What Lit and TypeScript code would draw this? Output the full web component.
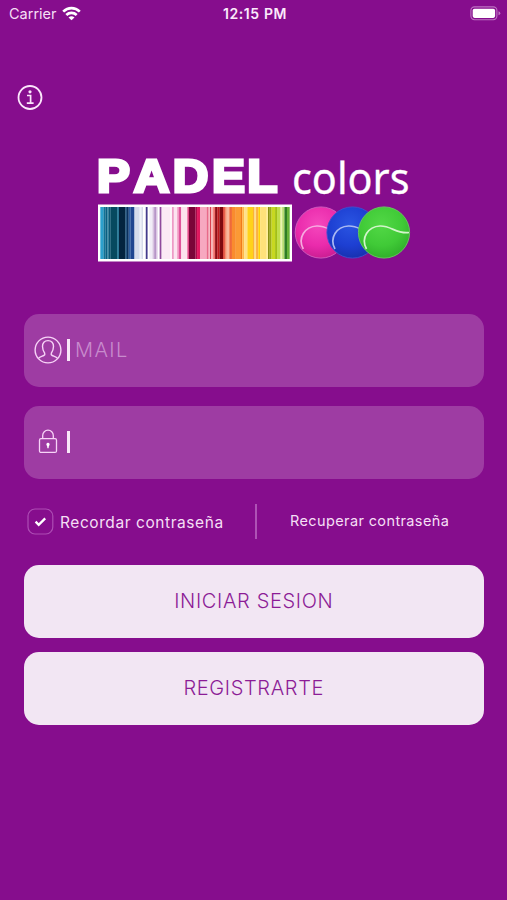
import { LitElement, html, css, svg } from "lit";
import { customElement } from "lit/decorators.js";

// Barcode bands: [left edge, colour]; units are thirds of a pixel, from 30 to 617.
const bands: [number, string][] = [
  [30, "#2ba0cc"], [40, "#107397"], [46, "#0b5f80"], [51, "#3b8fa9"], [55, "#0b5a78"], [62, "#064a5f"],
  [82, "#2a7a96"], [88, "#03243f"], [108, "#0e4a78"], [112, "#0a2f5c"], [118, "#2d5ea0"], [124, "#1f4690"],
  [136, "#d5dcec"], [152, "#eef1fa"], [158, "#cfd5e8"], [162, "#ffffff"], [171, "#433a8c"], [177, "#ffffff"],
  [182, "#f1edf7"], [192, "#d7c4e0"], [197, "#b795c8"], [204, "#dcc8e4"], [208, "#ffffff"], [214, "#8f4a9c"],
  [220, "#fbeaf5"], [248, "#ffffff"], [252, "#ee9bc6"], [258, "#fce4f0"], [268, "#f5a8cc"], [273, "#e0559b"],
  [281, "#fde3ee"], [300, "#e44b8a"], [305, "#7a0538"], [325, "#a80a4a"], [330, "#e0185f"], [340, "#f7a8c0"],
  [360, "#e86a8a"], [366, "#f9c0cc"], [370, "#d9404f"], [374, "#f7b5b5"], [380, "#f0706a"], [386, "#8e0d14"],
  [393, "#c21a1c"], [400, "#7e0a0e"], [411, "#e03a28"], [416, "#f4906f"], [422, "#f9b79a"], [430, "#ef6a3a"],
  [438, "#f98c2e"], [450, "#fb9a35"], [466, "#f07a1a"], [470, "#ffb84a"], [476, "#ffe08a"], [486, "#ffd21a"],
  [504, "#f9a81e"], [508, "#ffe08a"], [513, "#fbb040"], [520, "#ffd400"], [526, "#ffe27a"], [546, "#fff0a0"],
  [550, "#8a8f10"], [555, "#9bab14"], [561, "#c8d820"], [572, "#a3bf14"], [578, "#c0de4a"], [589, "#e9f3b0"],
  [594, "#b8dc70"], [601, "#2f7d24"], [609, "#66b035"],
];
const FIRST = 30;
const LAST = 617;
const BAND_SCALE = 189.3 / (LAST - FIRST);

const balls = [
  { x: 222.8, hi: "#f548bd", mid: "#ea2bac", low: "#c81c90", edge: "#d45fc0", seam: "#f7a9e0", id: "p" },
  { x: 254.5, hi: "#2a55e2", mid: "#1d3fd2", low: "#1730ac", edge: "#3f4fcf", seam: "#a9b8f2", id: "b" },
  { x: 286, hi: "#52d846", mid: "#40ca37", low: "#2fae2a", edge: "#69c860", seam: "#d3f5cb", id: "g" },
];

@customElement("padel-logo")
class PadelLogo extends LitElement {
  static styles = css`
    :host { display: block; }
    svg { display: block; overflow: visible; }
    .padel { font: 700 47px "Liberation Sans", Arial, sans-serif; stroke: #fff; stroke-width: 3.2px; }
    .colors { font: 400 44px "Noto Sans", sans-serif; stroke: #fff; stroke-width: .3px; }
  `;
  render() {
    return html`<svg width="320" height="110" viewBox="0 0 320 110">
      <defs>
        ${balls.map((b) => svg`<radialGradient id=${b.id} cx=".45" cy=".35" r=".68">
          <stop offset="0" stop-color=${b.hi}></stop>
          <stop offset=".6" stop-color=${b.mid}></stop>
          <stop offset="1" stop-color=${b.low}></stop>
        </radialGradient>`)}
      </defs>
      <text class="padel" transform="scale(1.05 1)" x="-0.9 34 71.3 108.500 142.200" y="40.300" fill="#fff">PADEL</text>
      <text class="colors" x="194" y="41.500" fill="#fff" textLength="117.500" lengthAdjust="spacingAndGlyphs">colors</text>
      <rect x="0" y="52.5" width="194" height="57" fill="#fff"></rect>
      ${bands.map(([x, colour], i) => {
        const next = i + 1 < bands.length ? bands[i + 1][0] : LAST;
        return svg`<rect x=${2.3 + (x - FIRST) * BAND_SCALE} y="55" width=${(next - x) * BAND_SCALE + 0.1} height="52" fill=${colour}></rect>`;
      })}
      ${balls.map((b) => svg`
        <circle cx=${b.x} cy="80.5" r="25.6" fill="url(#${b.id})" stroke=${b.edge} stroke-width=".9"></circle>
        <path transform="translate(${b.x - 286} 0)" fill="none" stroke=${b.seam} stroke-width="1.7"
          d="M268.500 97C262.500 86 270 74.500 282 74C293 73.500 299 82.500 311 80.500"></path>`)}
    </svg>`;
  }
}

@customElement("app-root")
class AppRoot extends LitElement {
  static styles = css`
    :host {
      display: flex; flex-direction: column; box-sizing: border-box;
      width: 507px; height: 900px; overflow: hidden;
      background: #860d8d; color: #f5dff5;
      font-family: Inter, "Open Sans", sans-serif;
    }
    svg { display: block; flex: none; }
    .status {
      display: grid; grid-template-columns: 1fr auto 1fr; align-items: center;
      height: 27px; padding: 0 6px 0 9px; box-sizing: border-box;
    }
    .carrier { display: flex; align-items: center; gap: 5px; font-size: 14.5px; letter-spacing: 0; }
    .time { font-size: 14px; font-weight: 600; letter-spacing: .6px; color: #fbeafb; }
    .battery { justify-self: end; }
    .info { margin: 57px 0 0 17px; }
    padel-logo { margin: 42px 0 0 97.5px; }
    .form { display: flex; flex-direction: column; margin: 52px 23.5px 0 24px; }
    .field {
      display: flex; align-items: center; height: 73px; border-radius: 15px;
      background: #9e3ca3; padding: 0 0 1px 9px; box-sizing: border-box; margin-bottom: 18.5px;
    }
    .slot { width: 30px; display: flex; justify-content: center; }
    .caret { width: 3px; height: 22px; background: #f8e8f8; margin: 0 5px 0 4px; }
    .hint { color: #c88bcd; font-size: 20px; letter-spacing: 1.4px; font-weight: 300; }
    .options { display: flex; align-items: center; height: 34px; margin: 7px 0 27px; }
    .remember { display: flex; align-items: center; gap: 6px; width: 231px; padding-left: 3px; box-sizing: border-box; font-size: 15.5px; letter-spacing: .57px; }
    .remember span { padding-top: 2px; }
    .divider { width: 1.5px; height: 35px; background: #ae52b5; }
    .recover { margin-left: 33.5px; padding-bottom: 1px; font-size: 14.5px; letter-spacing: .38px; }
    .btn {
      display: flex; align-items: center; justify-content: center;
      height: 73px; border: 0; border-radius: 15px; padding: 0 0 1px; margin-bottom: 14px;
      background: #f2e6f3; color: #8c1c96; font: 300 20px Inter, sans-serif; letter-spacing: .65px;
    }
  `;
  render() {
    return html`
      <div class="status">
        <div class="carrier"><span>Carrier</span>
          <svg width="19" height="15" viewBox="0 0 19 15" fill="none" stroke="#fff" stroke-width="2.7">
            <path d="M1.2 5.600C6 .9 13 .9 17.800 5.600"></path>
            <path d="M4.300 8.900C7.300 6.100 11.700 6.100 14.700 8.900"></path>
            <path d="M9.500 14.300L6.500 11.400Q9.500 9.100 12.500 11.400Z" fill="#fff" stroke="none"></path>
          </svg>
        </div>
        <div class="time">12:15 PM</div>
        <svg class="battery" width="31" height="15" viewBox="0 0 31 15">
          <rect x=".9" y=".9" width="26" height="12.800" rx="3.600" fill="none" stroke="#bd73c2" stroke-width="1.100"></rect>
          <rect x="2.700" y="2.700" width="22.400" height="9.200" rx="1.800" fill="#fff"></rect>
          <path d="M28.500 5.300Q30.300 6 30.300 7.300T28.500 9.300Z" fill="#bd73c2"></path>
        </svg>
      </div>
      <svg class="info" width="26" height="26" viewBox="0 0 26 26" fill="none" stroke="#fbe6fb" stroke-width="1.800">
        <circle cx="13" cy="13.500" r="11.500"></circle>
        <path d="M10 11.500H13.600V19.200M9.800 19.200H16.600" stroke-width="1.700"></path>
        <circle cx="13" cy="7.800" r="1.600" fill="#fbe6fb" stroke="none"></circle>
      </svg>
      <padel-logo></padel-logo>
      <div class="form">
        <div class="field">
          <div class="slot">
            <svg width="28" height="28" viewBox="0 0 28 28" fill="none" stroke="#f7d4f7" stroke-width="1.400">
              <circle cx="14" cy="14" r="12.900"></circle>
              <path d="M4.500 22.300C5.500 20.800 8 20.300 9.800 19.500Q11.300 18.800 10.700 17.200C8.700 14.700 8.600 13.500 8.500 10.500C8.400 6.800 10.500 4.600 14 4.600S19.600 6.800 19.500 10.500C19.400 13.500 19.300 14.700 17.300 17.200Q16.700 18.800 18.200 19.500C20 20.300 22.500 20.800 23.500 22.300"></path>
            </svg>
          </div>
          <div class="caret"></div><span class="hint">MAIL</span>
        </div>
        <div class="field">
          <div class="slot">
            <svg width="20" height="25" viewBox="0 0 20 25" fill="none" stroke="#f7d4f7" stroke-width="1.300">
              <rect x="1.500" y="9.700" width="17" height="13.700" rx="1.500"></rect>
              <path d="M4.700 9.500V6.500a5.300 5.300 0 0 1 10.600 0V9.500"></path>
              <path d="M10 13.800a1.700 1.700 0 0 1 .9 3.100L10.600 19.300H9.400L9.100 16.900A1.700 1.700 0 0 1 10 13.800Z" fill="#fff" stroke="none"></path>
            </svg>
          </div>
          <div class="caret"></div>
        </div>
        <div class="options">
          <div class="remember">
            <svg width="27" height="27" viewBox="0 0 27 27" fill="none">
              <rect x="1" y="1" width="24.800" height="25" rx="7" stroke="#ad4db4" stroke-width="1.200"></rect>
              <path d="M8.600 13.600L11.700 16.800L18.200 10.400" stroke="#fff" stroke-width="2.300"></path>
            </svg>
            <span>Recordar contraseña</span>
          </div>
          <div class="divider"></div>
          <div class="recover">Recuperar contraseña</div>
        </div>
        <button class="btn">INICIAR SESION</button>
        <button class="btn">REGISTRARTE</button>
      </div>`;
  }
}
